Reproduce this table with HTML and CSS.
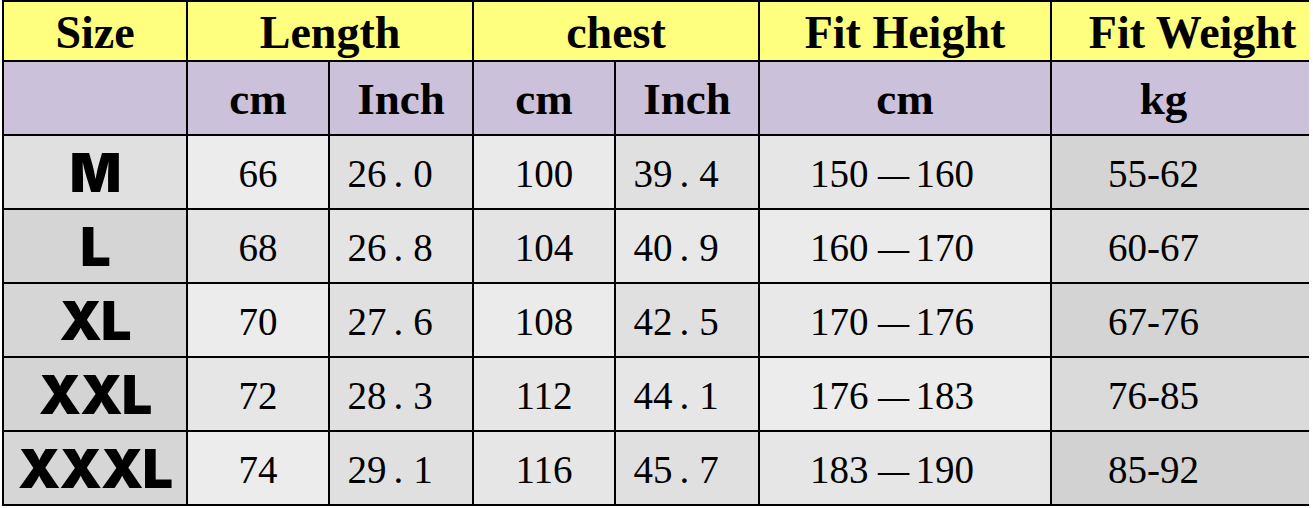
FILE: index.html
```html
<!DOCTYPE html>
<html lang="en">
<head>
<meta charset="utf-8">
<title>Size Chart</title>
<link rel="stylesheet" href="styles.css">
</head>
<body>
<table class="chart">
  <colgroup>
    <col class="w-size"><col class="w-a"><col class="w-b"><col class="w-a"><col class="w-b"><col class="w-h"><col class="w-w">
  </colgroup>
  <tr class="head1">
    <th>Size</th>
    <th colspan="2">Length</th>
    <th colspan="2">chest</th>
    <th>Fit Height</th>
    <th class="fitw">Fit Weight</th>
  </tr>
  <tr class="head2">
    <th></th>
    <th>cm</th>
    <th>Inch</th>
    <th>cm</th>
    <th>Inch</th>
    <th>cm</th>
    <th class="kg">kg</th>
  </tr>
  <tr class="row r1">
    <td class="size">M</td><td>66</td><td class="in">26<span class="dot">.</span>0</td><td>100</td><td class="in">39<span class="dot">.</span>4</td><td class="h">150<span class="dash">—</span>160</td><td class="w">55-62</td>
  </tr>
  <tr class="row r2">
    <td class="size">L</td><td>68</td><td class="in">26<span class="dot">.</span>8</td><td>104</td><td class="in">40<span class="dot">.</span>9</td><td class="h">160<span class="dash">—</span>170</td><td class="w">60-67</td>
  </tr>
  <tr class="row r3">
    <td class="size">XL</td><td>70</td><td class="in">27<span class="dot">.</span>6</td><td>108</td><td class="in">42<span class="dot">.</span>5</td><td class="h">170<span class="dash">—</span>176</td><td class="w">67-76</td>
  </tr>
  <tr class="row r4">
    <td class="size">XXL</td><td>72</td><td class="in">28<span class="dot">.</span>3</td><td>112</td><td class="in">44<span class="dot">.</span>1</td><td class="h">176<span class="dash">—</span>183</td><td class="w">76-85</td>
  </tr>
  <tr class="row r5">
    <td class="size">XXXL</td><td>74</td><td class="in">29<span class="dot">.</span>1</td><td>116</td><td class="in">45<span class="dot">.</span>7</td><td class="h">183<span class="dash">—</span>190</td><td class="w">85-92</td>
  </tr>
</table>
</body>
</html>
```

FILE: styles.css
```css
html, body {
  margin: 0;
  padding: 0;
  background: #ffffff;
}

.chart {
  margin: 0 0 0 2px;
  border-collapse: collapse;
  table-layout: fixed;
  width: 1306px;
  color: #000;
}

.w-size { width: 184px; }
.w-a { width: 142px; }
.w-b { width: 144px; }
.w-h { width: 292px; }
.w-w { width: 258px; }

.chart th,
.chart td {
  border: 2px solid #000;
  padding: 0;
  text-align: center;
  vertical-align: middle;
  white-space: nowrap;
  overflow: visible;
}

.chart th:last-child,
.chart td:last-child {
  border-right: none;
}

.head1 th {
  height: 60px;
  background: #ffff7f;
  font-family: "Liberation Serif", "Times New Roman", serif;
  font-weight: bold;
  font-size: 46px;
  line-height: 1;
  padding-top: 4px;
  box-sizing: border-box;
}

.head1 .fitw {
  padding-left: 24px;
}

.head2 th {
  height: 70px;
  background: #ccc1da;
  font-family: "Liberation Serif", "Times New Roman", serif;
  font-weight: bold;
  font-size: 45px;
  line-height: 1;
  padding-top: 2px;
}

.head2 .kg {
  padding-right: 34px;
}

.row td {
  height: 69px;
  font-family: "Liberation Serif", "Times New Roman", serif;
  font-size: 39px;
  line-height: 1;
  padding-top: 3px;
  background: #e4e4e4;
}

.row td.size {
  font-family: Inter, "DejaVu Sans", sans-serif;
  font-weight: 900;
  font-size: 54px;
  letter-spacing: -1px;
  padding-top: 1px;
  height: 71px;
}

.row td.in {
  padding-right: 22px;
}

.row td.h {
  padding-right: 26px;
}

.row td.w {
  padding-right: 54px;
}

.dot {
  margin: 0 10px 0 7px;
}

.dash {
  display: inline-block;
  transform: scaleX(0.8);
  margin: 0 3px 0 5px;
}

/* cell shading */
.r1 td:nth-child(1) { background: #e0e0e0; }
.r1 td:nth-child(2) { background: #ececec; }
.r1 td:nth-child(3) { background: #e0e0e0; }
.r1 td:nth-child(4) { background: #eaeaea; }
.r1 td:nth-child(5) { background: #e0e0e0; }
.r1 td:nth-child(6) { background: #e6e6e6; }
.r1 td:nth-child(7) { background: #d4d4d4; }

.r2 td:nth-child(1) { background: #d5d5d5; }
.r2 td:nth-child(2) { background: #e4e4e4; }
.r2 td:nth-child(3) { background: #e4e4e4; }
.r2 td:nth-child(4) { background: #e4e4e4; }
.r2 td:nth-child(5) { background: #e8e8e8; }
.r2 td:nth-child(6) { background: #ebebeb; }
.r2 td:nth-child(7) { background: #dcdcdc; }

.r3 td:nth-child(1) { background: #d6d6d6; }
.r3 td:nth-child(2) { background: #ececec; }
.r3 td:nth-child(3) { background: #e0e0e0; }
.r3 td:nth-child(4) { background: #ebebeb; }
.r3 td:nth-child(5) { background: #e0e0e0; }
.r3 td:nth-child(6) { background: #e8e8e8; }
.r3 td:nth-child(7) { background: #d4d4d4; }

.r4 td:nth-child(1) { background: #d4d4d4; }
.r4 td:nth-child(2) { background: #e6e6e6; }
.r4 td:nth-child(3) { background: #e0e0e0; }
.r4 td:nth-child(4) { background: #e6e6e6; }
.r4 td:nth-child(5) { background: #e6e6e6; }
.r4 td:nth-child(6) { background: #ececec; }
.r4 td:nth-child(7) { background: #dadada; }

.r5 td:nth-child(1) { background: #d6d6d6; }
.r5 td:nth-child(2) { background: #ececec; }
.r5 td:nth-child(3) { background: #e0e0e0; }
.r5 td:nth-child(4) { background: #e6e6e6; }
.r5 td:nth-child(5) { background: #e0e0e0; }
.r5 td:nth-child(6) { background: #e6e6e6; }
.r5 td:nth-child(7) { background: #d2d2d2; }
```
